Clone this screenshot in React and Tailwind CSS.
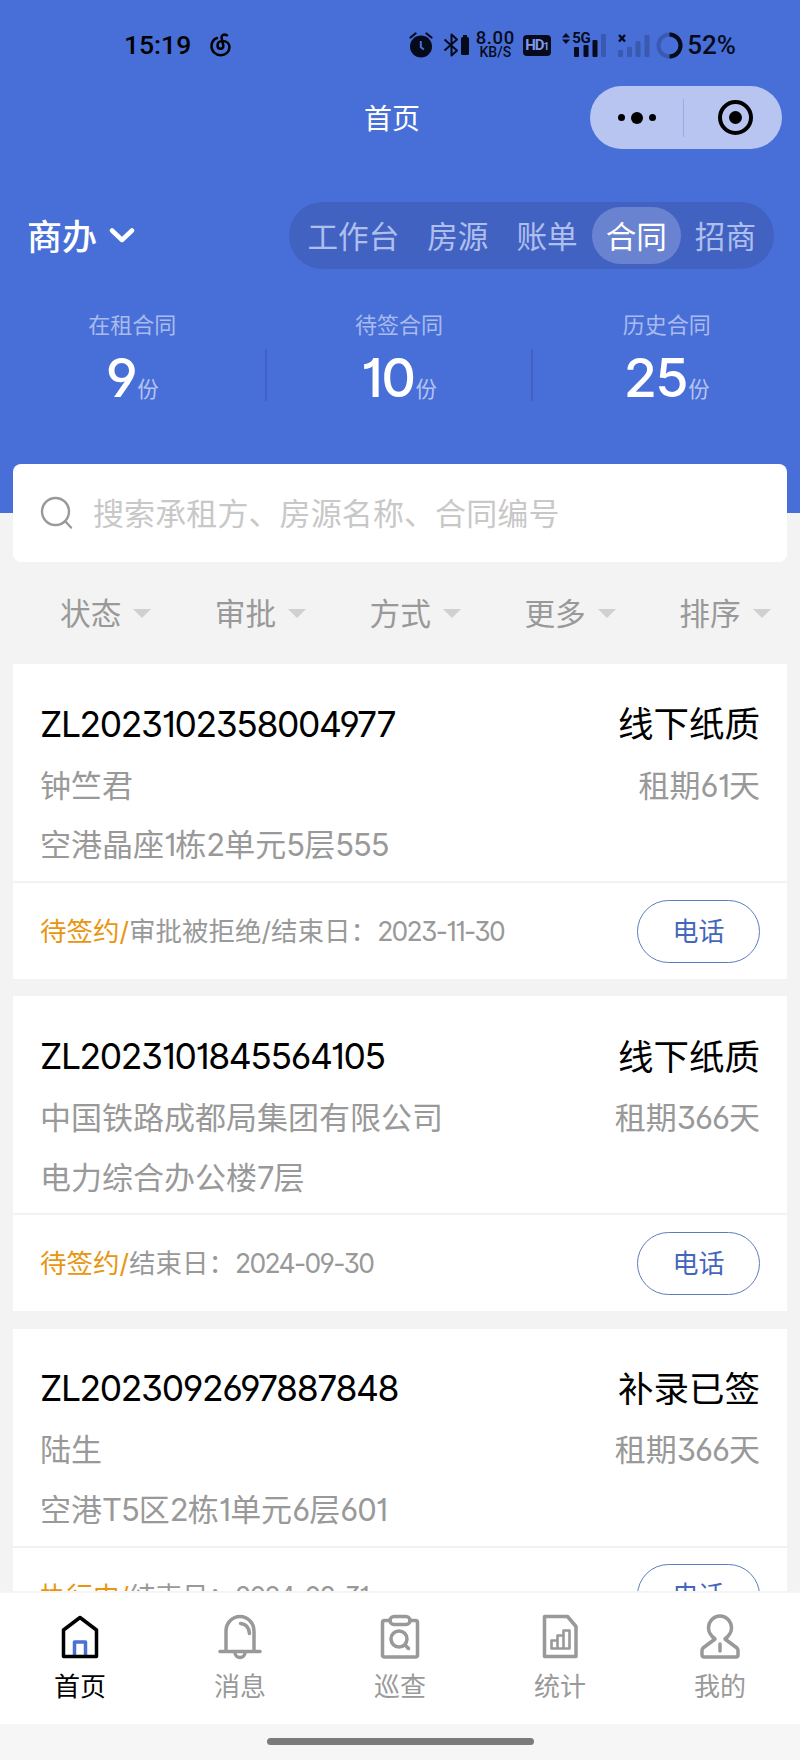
import React, { useState } from "react";

const TABS = ["工作台", "房源", "账单", "合同", "招商"];

const STATS = [
  { label: "在租合同", value: 9 },
  { label: "待签合同", value: 10 },
  { label: "历史合同", value: 25 },
];

const FILTERS = ["状态", "审批", "方式", "更多", "排序"];

const CONTRACTS = [
  {
    no: "ZL2023102358004977",
    type: "线下纸质",
    tenant: "钟竺君",
    term: "租期61天",
    room: "空港晶座1栋2单元5层555",
    status: "待签约/",
    note: "审批被拒绝/结束日：",
    end: "2023-11-30",
  },
  {
    no: "ZL2023101845564105",
    type: "线下纸质",
    tenant: "中国铁路成都局集团有限公司",
    term: "租期366天",
    room: "电力综合办公楼7层",
    status: "待签约/",
    note: "结束日：",
    end: "2024-09-30",
  },
  {
    no: "ZL2023092697887848",
    type: "补录已签",
    tenant: "陆生",
    term: "租期366天",
    room: "空港T5区2栋1单元6层601",
    status: "执行中/",
    note: "结束日：",
    end: "2024-08-31",
  },
];

// Latin letters and digits are set a little tighter than the Chinese around them
function Mixed({ text }) {
  return text.split(/([A-Z0-9]+)/).map((part, idx) =>
    /^[A-Z0-9]/.test(part) ? (
      <span key={idx} className="tracking-[-1px]">
        {part}
      </span>
    ) : (
      part
    )
  );
}

function StatusBar() {
  return (
    <div className="flex h-[80px] items-center pt-[10px] pl-[124px] pr-[64px] text-[#060b1c] font-['Roboto',sans-serif]">
      <span className="w-[67px] text-[26.5px] leading-none font-medium text-black">15:19</span>
      <svg className="ml-[19px]" width="22" height="24" viewBox="0 0 22 24" fill="none" stroke="#000" strokeWidth="2.5" strokeLinecap="round">
        <path d="M17 2.3C14 .8 11.3 2 11.6 4.800l1.600 7.200c.5 2.400-.8 3.800-2.500 3.800-1.900 0-3.200-1.400-3.200-3.300 0-2.700 2-4.500 4.800-4.500 4.200 0 7.200 2.300 7.200 6 0 4.800-3.900 8.200-8.800 8.200S1.500 18.300 1.500 13.300C1.500 9.500 3.500 6.300 7 5" />
      </svg>

      <div className="ml-auto flex items-center">
        <svg width="24" height="26" viewBox="0 0 24 26" fill="none">
          <circle cx="12" cy="14.500" r="11" fill="#060b1c" />
          <path d="M1.500 5.500 6.500 1.500M22.500 5.500 17.500 1.500" stroke="#060b1c" strokeWidth="2.200" strokeLinecap="round" />
          <path d="M11.800 9v6l3 2.500" stroke="#4a6fd8" strokeWidth="2" />
        </svg>
        <svg className="ml-[10px]" width="27" height="26" viewBox="0 0 27 26" fill="none">
          <path d="M1.500 7.500 14 18.500 8.500 23.500V2.500L14 7.500 1.500 18.500" stroke="#060b1c" strokeWidth="2" strokeLinejoin="round" />
          <rect x="18" y="5" width="8" height="18" rx="1.500" fill="#060b1c" />
          <rect x="20" y="3" width="4" height="3" fill="#060b1c" />
        </svg>
        <div className="ml-[5px] flex w-[40px] flex-col items-center font-medium">
          <span className="text-[18.5px] leading-[14px] tracking-[0.6px]">8.00</span>
          <span className="text-[14px] leading-[15px]">KB/S</span>
        </div>
        <div className="ml-[8px] flex h-[21px] w-[28px] items-center justify-center rounded-[4px] bg-[#060b1c] text-[#7f9ae8]">
          <span className="text-[15px] leading-none font-bold tracking-[-1px]">HD</span>
          <span className="pt-[4px] text-[10px] leading-none font-bold">1</span>
        </div>
        <div className="ml-[11px] flex w-[45px] flex-col">
          <div className="flex h-[12px] items-center">
            <svg width="8" height="11" viewBox="0 0 8 11" fill="#060b1c">
              <path d="M4 0l4 4.500H0zM4 11l4-4.500H0z" />
            </svg>
            <span className="ml-[2px] text-[15px] leading-none font-bold tracking-[-0.5px]">5G</span>
          </div>
          <svg className="-mt-[12px]" width="45" height="26" viewBox="0 0 45 26" fill="#060b1c">
            <rect x="12" y="15" width="5" height="10" rx="1" />
            <rect x="21.500" y="13" width="5" height="12" rx="1" />
            <rect x="30.500" y="8" width="5" height="17" rx="1" />
            <rect x="39" y="2" width="5" height="23" rx="1" opacity="0.2" />
          </svg>
        </div>
        <svg className="ml-[10px]" width="33" height="26" viewBox="0 0 33 26" fill="#060b1c">
          <path d="M2 3l6 6.500M8 3l-6 6.500" stroke="#060b1c" strokeWidth="2.400" />
          <g opacity="0.2">
            <rect x="1" y="18" width="5" height="7" rx="1" />
            <rect x="10" y="15" width="5" height="10" rx="1" />
            <rect x="18.500" y="9" width="5" height="16" rx="1" />
            <rect x="27.500" y="3" width="5" height="22" rx="1" />
          </g>
        </svg>
        <svg className="ml-[6px]" width="27" height="27" viewBox="0 0 27 27" fill="none" strokeWidth="4">
          <circle cx="13.500" cy="13.500" r="11" stroke="#060b1c" opacity="0.2" />
          <path d="M13.500 2.500a11 11 0 0 1 0 22" stroke="#060b1c" />
        </svg>
        <span className="ml-[4px] text-[26px] leading-none font-medium">52%</span>
      </div>
    </div>
  );
}

function TitleBar() {
  return (
    <div className="flex h-[75px] items-center justify-end pr-[18px]">
      <h1 className="mr-[170px] pt-[2px] text-[28px] leading-none text-white">首页</h1>
      <div className="flex h-[63px] w-[192px] items-center rounded-full bg-[#b7c5f0]">
        <div className="flex flex-1 items-center justify-center gap-[6px]">
          <i className="size-[7px] rounded-full bg-black" />
          <i className="size-[12px] rounded-full bg-black" />
          <i className="size-[7px] rounded-full bg-black" />
        </div>
        <div className="h-[38px] w-px bg-[#9aabe0]" />
        <div className="flex flex-1 items-center justify-center pl-[5px]">
          <div className="flex size-[35px] items-center justify-center rounded-full border-4 border-black">
            <i className="size-[13px] rounded-full bg-black" />
          </div>
        </div>
      </div>
    </div>
  );
}

function ContractCard({ item }) {
  return (
    <article className="h-[315px] shrink-0 bg-white">
      <div className="h-[219px] border-b-2 border-[#f2f2f2] px-[27px] pt-[32px]">
        <div className="flex h-[57px] items-center justify-between text-[35.5px] text-black">
          <span className="tracking-[-1.4px]">{item.no}</span>
          <span className="pt-[1px]">{item.type}</span>
        </div>
        <div className="flex h-[66px] items-center justify-between text-[31px] text-[#999]">
          <span>{item.tenant}</span>
          <span>
            <Mixed text={item.term} />
          </span>
        </div>
        <div className="flex h-[53px] items-center text-[31px] text-[#999]">
          <span>
            <Mixed text={item.room} />
          </span>
        </div>
      </div>
      <div className="flex h-[96px] items-center justify-between px-[27px] text-[26.5px] text-[#999]">
        <span className="pt-[2px]">
          <span className="text-[#e8960f]">{item.status}</span>
          {item.note}
          <span className="tracking-[-1.7px]">{item.end}</span>
        </span>
        <button className="h-[63px] w-[123px] rounded-full border-[1.5px] border-[#5d7cbd] text-[26px] text-[#4566bd]">
          电话
        </button>
      </div>
    </article>
  );
}

const NAV = [
  {
    label: "首页",
    icon: (
      <>
        <path d="M14.500 42V28h11V42" stroke="#4a6fd8" />
        <path d="M3.500 42.500V16L20 3.500 36.500 16v26.500z" stroke="#000" />
      </>
    ),
  },
  {
    label: "消息",
    icon: (
      <>
        <path d="M6 37V17a14 14.500 0 0 1 28 0v20M0 37.500h40M15 38.500a5 5 0 0 0 10 0" />
        <path d="M20.500 9.500c5.500.5 8.500 4 9 10" />
      </>
    ),
  },
  {
    label: "巡查",
    icon: (
      <>
        <path d="M10 6.500H4.500a2 2 0 0 0-2 2v32.500a2 2 0 0 0 2 2h31a2 2 0 0 0 2-2V8.500a2 2 0 0 0-2-2H30" />
        <rect x="10" y="2.500" width="20" height="8" rx="4" />
        <circle cx="19" cy="25" r="8" />
        <path d="M25 31l3.500 3.500" />
      </>
    ),
  },
  {
    label: "统计",
    icon: (
      <>
        <path d="M4.500 2.500h23l8.500 10V42.500H4.500z" />
        <path d="M11.500 34.500v-8h6v8zM17.500 34.500V21.500h6v13zM23.500 34.500V16.500h6v18z" strokeWidth="2.600" />
      </>
    ),
  },
  {
    label: "我的",
    icon: (
      <path d="M15 25C10.500 21.500 8.500 18 8.500 14a11.500 12 0 0 1 23 0c0 4-2 7.500-6.500 11l12 9q1 1 1 2.500v4.500a2 2 0 0 1-2 2H4a2 2 0 0 1-2-2v-4.500q0-1.500 1-2.500zM20 30v7" />
    ),
  },
];

export default function App() {
  const [tab, setTab] = useState("合同");
  const [page, setPage] = useState("首页");

  return (
    <div className="flex h-[1760px] w-[800px] flex-col overflow-hidden bg-[#f3f3f3] font-['Inter','Noto_Sans_CJK_SC',sans-serif] [font-feature-settings:'cv01','cv03','cv04','cv09']">
      <header className="h-[513px] shrink-0 bg-[#486fd8]">
        <StatusBar />
        <TitleBar />

        <div className="mt-[47px] flex h-[67px] items-center justify-between pr-[26px] pl-[27px]">
          <button className="flex items-center gap-[12px] pt-[1px] text-[35px] leading-none font-medium text-white">
            <span className="pt-[2px]">商办</span>
            <svg width="26" height="16" viewBox="0 0 26 16" fill="none" stroke="#fff" strokeWidth="4.500" strokeLinecap="round" strokeLinejoin="round">
              <path d="M3 2.500l10 9.500L23 2.500" />
            </svg>
          </button>
          <nav className="flex h-[67px] items-center rounded-full bg-[#4262c1] px-[4px]">
            {TABS.map((t) => (
              <button
                key={t}
                onClick={() => setTab(t)}
                className={
                  t === tab
                    ? "h-[57px] rounded-full bg-[#6a83d1] px-[14px] pt-[3px] text-[30.6px] leading-none text-white"
                    : "h-[57px] px-[14px] pt-[3px] text-[30.6px] leading-none text-[#aebfee]"
                }
              >
                {t}
              </button>
            ))}
          </nav>
        </div>

        <div className="mt-[40px] grid grid-cols-3">
          {STATS.map((s, idx) => (
            <div key={s.label} className="flex items-end">
              <div className="flex flex-1 flex-col items-center">
                <span className="text-[22px] leading-[32px] text-[#a9bbed]">{s.label}</span>
                <div className="mt-[7px] flex h-[56px] items-baseline text-white">
                  <span className="text-[54px] leading-[60px] font-medium tracking-[-1.6px]">{s.value}</span>
                  <span className="ml-[1px] text-[21.5px] text-[#b5c4ef]">份</span>
                </div>
              </div>
              {idx < STATS.length - 1 && <div className="mb-[3px] h-[52px] w-[2px] bg-[#4162c4]" />}
            </div>
          ))}
        </div>
      </header>

      <div className="z-10 mx-[13px] -mt-[49px] flex h-[98px] shrink-0 items-center rounded-[8px] bg-white pl-[27px] text-[31px] text-[#c8c8c8]">
        <svg width="34" height="34" viewBox="0 0 34 34" fill="none" stroke="#999" strokeWidth="2.400" strokeLinecap="round">
          <circle cx="15.500" cy="15.500" r="13.500" />
          <path d="M25.500 25.500l5.500 6" />
        </svg>
        <span className="ml-[19px] pt-[3px] tracking-[0.1px]">搜索承租方、房源名称、合同编号</span>
      </div>

      <div className="mx-[13px] grid h-[102px] shrink-0 grid-cols-5">
        {FILTERS.map((f) => (
          <button key={f} className="flex items-center pl-[47px] text-[30.7px] text-[#999]">
            <span className="pt-[3px]">{f}</span>
            <svg className="ml-[12px]" width="18" height="9" viewBox="0 0 18 9" fill="#d0d0d0">
              <path d="M0 0h18L9 9z" />
            </svg>
          </button>
        ))}
      </div>

      <main className="mx-[13px] flex min-h-0 flex-1 flex-col gap-[17.3px] overflow-hidden">
        {CONTRACTS.map((c) => (
          <ContractCard key={c.no} item={c} />
        ))}
      </main>

      <footer className="grid h-[133px] shrink-0 grid-cols-5 border-t-2 border-[#f4f4f4] bg-white">
        {NAV.map((n) => (
          <button
            key={n.label}
            onClick={() => setPage(n.label)}
            className={
              n.label === page
                ? "flex flex-col items-center pt-[21px] text-[26px] leading-[38px] text-black"
                : "flex flex-col items-center pt-[21px] text-[26px] leading-[38px] text-[#999]"
            }
          >
            <svg className="mb-[9px] overflow-visible" width="40" height="45" viewBox="0 0 40 45" fill="none" stroke="#999" strokeWidth="3.500" strokeLinecap="round" strokeLinejoin="round">
              {n.icon}
            </svg>
            {n.label}
          </button>
        ))}
      </footer>
      <div className="flex h-[36px] shrink-0 justify-center bg-[#f6f6f6] pt-[14px]">
        <div className="h-[7px] w-[267px] rounded-full bg-[#7b7b7b]" />
      </div>
    </div>
  );
}
